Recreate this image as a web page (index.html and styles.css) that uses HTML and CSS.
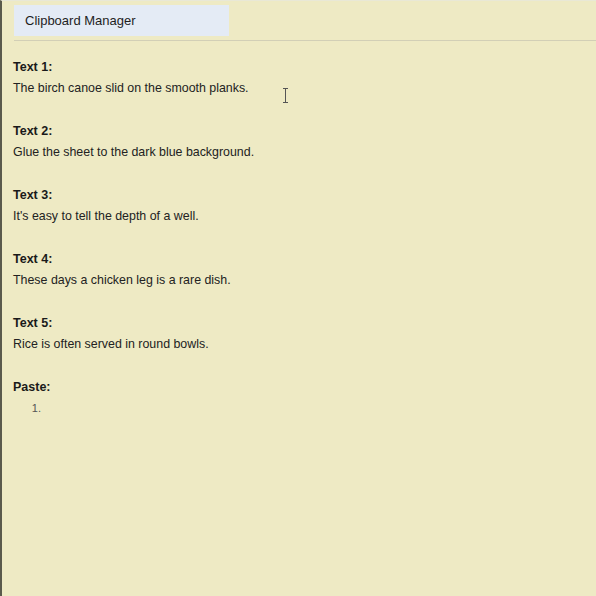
FILE: index.html
```html
<!DOCTYPE html>
<html>
<head>
<meta charset="utf-8">
<link rel="stylesheet" href="styles.css">
</head>
<body>
<div class="app">
  <div class="header">
    <div class="tab">Clipboard Manager</div>
  </div>
  <div class="content">
    <div class="item">
      <div class="label">Text 1:</div>
      <div class="text">The birch canoe slid on the smooth planks.</div>
    </div>
    <div class="item">
      <div class="label">Text 2:</div>
      <div class="text">Glue the sheet to the dark blue background.</div>
    </div>
    <div class="item">
      <div class="label">Text 3:</div>
      <div class="text">It's easy to tell the depth of a well.</div>
    </div>
    <div class="item">
      <div class="label">Text 4:</div>
      <div class="text">These days a chicken leg is a rare dish.</div>
    </div>
    <div class="item">
      <div class="label">Text 5:</div>
      <div class="text">Rice is often served in round bowls.</div>
    </div>
    <div class="item">
      <div class="label">Paste:</div>
      <ol class="paste"><li></li></ol>
    </div>
  </div>
  <svg class="cursor" width="7" height="15" viewBox="0 0 7 15"><path d="M1 0.5h5M3.5 0.5v14M1 14.5h5" stroke="#555" stroke-width="1" fill="none"/></svg>
</div>
</body>
</html>
```
FILE: styles.css
```css
html, body {
  margin: 0;
  padding: 0;
  height: 100%;
}
body {
  background: #eeeac4;
  font-family: "Liberation Sans", Arial, sans-serif;
  color: #222;
}
.app {
  position: relative;
  height: 596px;
  border-left: 2px solid #5a5a4c;
  border-top: 1px solid #e9e8d6;
  box-sizing: border-box;
}
.header {
  margin-left: 12px;
  padding-top: 4px;
  height: 35px;
  border-bottom: 1px solid #d2cfb6;
}
.tab {
  width: 204px;
  height: 31px;
  background: #e4ebf5;
  padding-left: 11px;
  font-size: 13px;
  line-height: 31px;
  color: #1e1e1e;
}
.content {
  padding: 18px 0 0 11px;
}
.item {
  margin-bottom: 27px;
}
.label {
  font-weight: bold;
  font-size: 12.5px;
  line-height: 16px;
  margin-bottom: 5px;
  color: #1a1a1a;
}
.text {
  font-size: 12.4px;
  line-height: 16px;
  color: #222;
}
.paste {
  margin: 0;
  padding-left: 31px;
  font-size: 11px;
  line-height: 16px;
  color: #555;
}
.cursor {
  position: absolute;
  left: 280px;
  top: 87px;
}
```
